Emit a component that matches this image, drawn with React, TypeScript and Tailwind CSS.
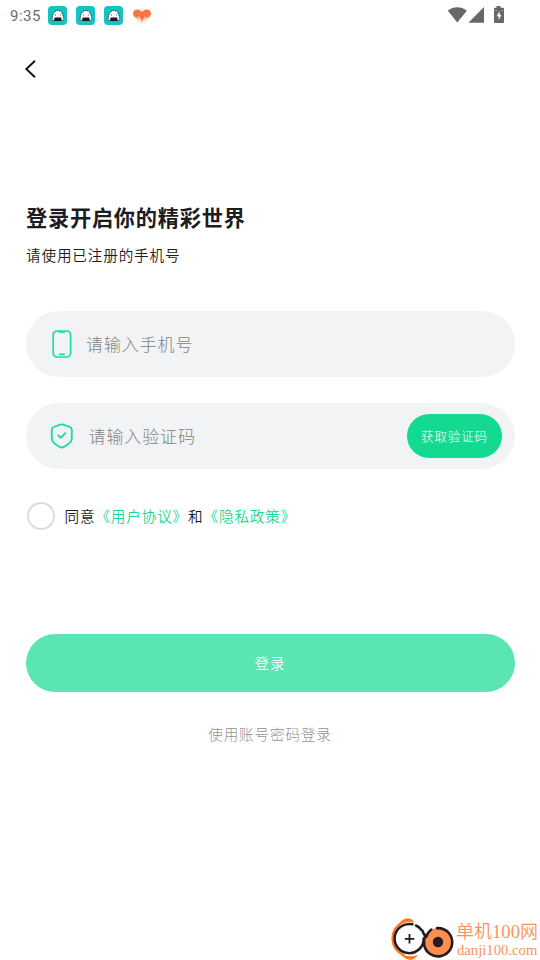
import { useState } from 'react'
import type { ReactNode } from 'react'

function AppBadge() {
  return (
    <svg className="h-[19px] w-[19px]" viewBox="0 0 19 19">
      <rect width="19" height="19" rx="4" fill="#16c3c3" />
      <path
        d="M5.200 14.500C3.700 13.800 3.800 11.800 4.500 10.500 5 7.500 6.500 4.500 9.900 4.500s4.900 3 5.400 6c.7 1.300.8 3.300-.7 4z"
        fill="#fff"
        stroke="#1c3c3e"
        strokeWidth="0.900"
        strokeDasharray="1.500 0.500"
      />
      <path d="M6.300 14.900v-2.500q0-.8.800-.8h5.600q.8 0 .8.800v2.500z" fill="#171c1d" />
      <path d="M7.500 8.300v1.200M12.300 8.300v1.200" stroke="#555" strokeWidth="0.900" />
    </svg>
  )
}

function HeartBadge() {
  return (
    <svg className="h-[19px] w-[20px]" viewBox="0 0 20 19">
      <circle cx="10" cy="9" r="8.300" fill="#fdf3e6" />
      <path
        d="M10 15.200C5 12.300 1 9.700 1 6.300 1 3.800 3 2.400 5.200 2.400c2 0 3.600.9 4.800 2.500 1.200-1.600 2.800-2.500 4.800-2.500C17 2.400 19 3.800 19 6.300c0 3.400-4 6-9 8.900z"
        fill="#fb7442"
      />
      <path
        d="M9.300 15.800c0-2.700-.8-4-3-6M8 13.500l-4.300-2.700M10.700 15.800c0-2.700.8-4 3-6M12 13.500l4.300-2.700"
        fill="none"
        stroke="#fdeadb"
        strokeWidth="1.100"
        strokeLinecap="round"
      />
    </svg>
  )
}

function StatusBar() {
  return (
    <header className="flex h-8 items-center justify-between pr-[35px] pl-[10px]">
      <div className="flex items-center">
        <span className="w-[38px] font-[Roboto] text-[15px] tracking-[0.500px] text-[#6b6b6b]">9:35</span>
        <div className="flex gap-[9px] pb-px">
          <AppBadge />
          <AppBadge />
          <AppBadge />
        </div>
        <div className="ml-[9px]">
          <HeartBadge />
        </div>
      </div>
      <div className="flex items-center pb-[3px]">
        <svg className="h-[16px] w-[20px]" viewBox="0 0 20 16" fill="#676767">
          <path d="M.8 3.700C6.400-.9 14.200-.9 19.800 3.700L10.300 15.600z" />
        </svg>
        <svg className="ml-[1px] h-[16px] w-[16px]" viewBox="0 0 16 16" fill="#676767">
          <path d="M16 0v15.700H.4z" />
        </svg>
        <svg className="ml-[9px] h-[17px] w-[12px]" viewBox="0 0 12 17">
          <path d="M3.500 0h4v1.700H10q1 0 1 1V16q0 1-1 1H2q-1 0-1-1V2.700q0-1 1-1h1.500z" fill="#676767" />
          <path d="M6.600 5L3.600 10.200h2.100V14L8.500 8.800H6.600z" fill="#fff" />
          <path d="M2.500 4.500h1M8.500 4.500h1" stroke="#ddd" strokeWidth="1" />
        </svg>
      </div>
    </header>
  )
}

function PhoneIcon() {
  return (
    <svg className="h-7 w-5" viewBox="0 0 20 28" fill="none" stroke="#1bdc99" strokeWidth="1.700">
      <rect x="1.200" y="1" width="17.400" height="26" rx="4" />
      <path d="M6.500 1.700q.3 1 1.200 1h4.400q.9 0 1.200-1" fill="#1bdc99" strokeWidth="0.600" />
      <path d="M7.700 24.300h4.500" strokeLinecap="round" />
    </svg>
  )
}

function ShieldIcon() {
  return (
    <svg
      className="h-[26px] w-6"
      viewBox="0 0 24 26"
      fill="none"
      stroke="#1bdc99"
      strokeWidth="1.800"
      strokeLinecap="round"
      strokeLinejoin="round"
    >
      <path d="M10.300 1.600q1.500-.5 3 0l6.500 2.400q2 .7 2 2.800V15c0 2.300-.8 4-2.700 5.400l-5.200 3.500q-2.100 1.200-4.200 0l-5.200-3.500C2.600 19 1.800 17.300 1.800 15V6.800q0-2.100 2-2.800z" />
      <path d="M8.200 12.400l2.500 2.500 4.700-4.800" />
    </svg>
  )
}

function Field({ icon, label, children }: { icon: ReactNode; label: string; children?: ReactNode }) {
  return (
    <div className="flex h-[66px] items-center rounded-full bg-[#f1f3f5] pr-[12.500px] pl-[24.500px]">
      {icon}
      <input
        placeholder={label}
        className="mb-px min-w-0 flex-1 bg-transparent text-[17px] font-light tracking-[0.900px] text-[#666] outline-none placeholder:text-[#828282]"
      />
      {children}
    </div>
  )
}

function Watermark() {
  return (
    <div className="absolute top-[917px] left-[390px] flex h-[43px] w-[150px] items-start text-[#fb9458]">
      <svg className="h-[43px] w-[65px] shrink-0" viewBox="0 0 65 43" fill="none">
        <path d="M14 4.500Q2.500 10 2.500 21.500q0 11.500 11.500 17" stroke="#fa7a1e" strokeWidth="2.200" />
        <path
          d="M8 8.500Q11.500 1.500 18 1.300q4 0 6 4.200Q15 3.500 8 8.500zM10 36.500q8 4.500 18 1.500-3.500 5-8.500 4.700-5.500-.7-9.500-6.200z"
          fill="#fa7a1e"
        />
        <path d="M22.500 7.300A14.600 14.600 0 1 0 33.800 21.500" stroke="#231c20" strokeWidth="2.500" strokeLinecap="round" />
        <path d="M26 8.500q3 1.300 5.200 4.200" stroke="#231c20" strokeWidth="2.500" strokeLinecap="round" />
        <path d="M19.500 17v9.500M14.800 21.800h9.500" stroke="#231c20" strokeWidth="1.800" />
        <circle cx="48" cy="25" r="14" fill="#fb8f50" />
        <path d="M46 11.200q8-.8 13 5A14.200 14.200 0 1 1 35.500 18.500" stroke="#231c20" strokeWidth="2.600" />
        <path d="M32.300 13.500q1.500 4.500 4 6 1.500-4.500 5-7" stroke="#231c20" strokeWidth="2.500" strokeLinecap="round" />
        <circle cx="48" cy="25" r="5.200" fill="#231c20" />
      </svg>
      <div className="flex flex-col whitespace-nowrap">
        <span className="mt-[1px] ml-[1px] font-['Liberation_Serif','Noto_Sans_CJK_SC',serif] text-[18px] leading-[27px] font-[350]">
          单机<span className="text-[18.700px]">100</span>网
        </span>
        <span className="ml-[2px] font-['Liberation_Serif',serif] text-[14.700px] leading-[8px]">danji100.com</span>
      </div>
    </div>
  )
}

export default function App() {
  const [agreed, setAgreed] = useState(false)

  return (
    <div className="relative h-[960px] w-[540px] overflow-hidden bg-white font-['Noto_Sans_CJK_SC',sans-serif] text-[#1c1c22]">
      <StatusBar />

      <nav className="flex h-[74px] items-center pl-[24px]">
        <button aria-label="返回">
          <svg className="h-5 w-3" viewBox="0 0 12 20" fill="none" stroke="#111" strokeWidth="1.900">
            <path d="M11 1.700L2.300 10l8.700 8.300" />
          </svg>
        </button>
      </nav>

      <main className="flex flex-col px-[25.500px] pt-[95px]">
        <h1 className="ml-[0.500px] text-[21.200px] leading-8 font-bold tracking-[0.780px]">登录开启你的精彩世界</h1>
        <p className="mt-[10px] ml-[0.500px] text-[14.600px] leading-6 font-[350] tracking-[0.850px]">
          请使用已注册的手机号
        </p>

        {/* Form */}
        <div className="mt-[44px] flex flex-col gap-[26px]">
          <Field icon={<div className="mr-[14px] ml-[2px]"><PhoneIcon /></div>} label="请输入手机号" />
          <Field icon={<div className="mr-[14.500px]"><ShieldIcon /></div>} label="请输入验证码">
            <button className="h-[44px] w-[95px] rounded-full bg-[#14d990] pt-px text-[12.600px] font-light tracking-[0.800px] text-white">
              获取验证码
            </button>
          </Field>
        </div>

        {/* Agreement */}
        <div className="mt-[33px] flex items-center text-[14.600px] leading-7 font-[350] tracking-[0.850px]">
          <button
            aria-pressed={agreed}
            onClick={() => setAgreed(!agreed)}
            className={`mr-[10px] ml-px h-7 w-7 rounded-full border-2 ${agreed ? 'border-[#14d990] bg-[#14d990]' : 'border-[#dcdcdc]'}`}
          />
          <span>同意</span>
          <span className="text-[#1bd795]">《用户协议》</span>
          <span>和</span>
          <span className="text-[#1bd795]">《隐私政策》</span>
        </div>

        <button className="mt-[104px] h-[58px] rounded-full bg-[#5be5b2] text-[14.600px] font-[350] tracking-[0.800px] text-white">
          登录
        </button>
        <button className="mt-[30px] self-center text-[14.600px] leading-6 font-light tracking-[0.850px] text-[#929292]">
          使用账号密码登录
        </button>
      </main>

      <Watermark />
    </div>
  )
}
